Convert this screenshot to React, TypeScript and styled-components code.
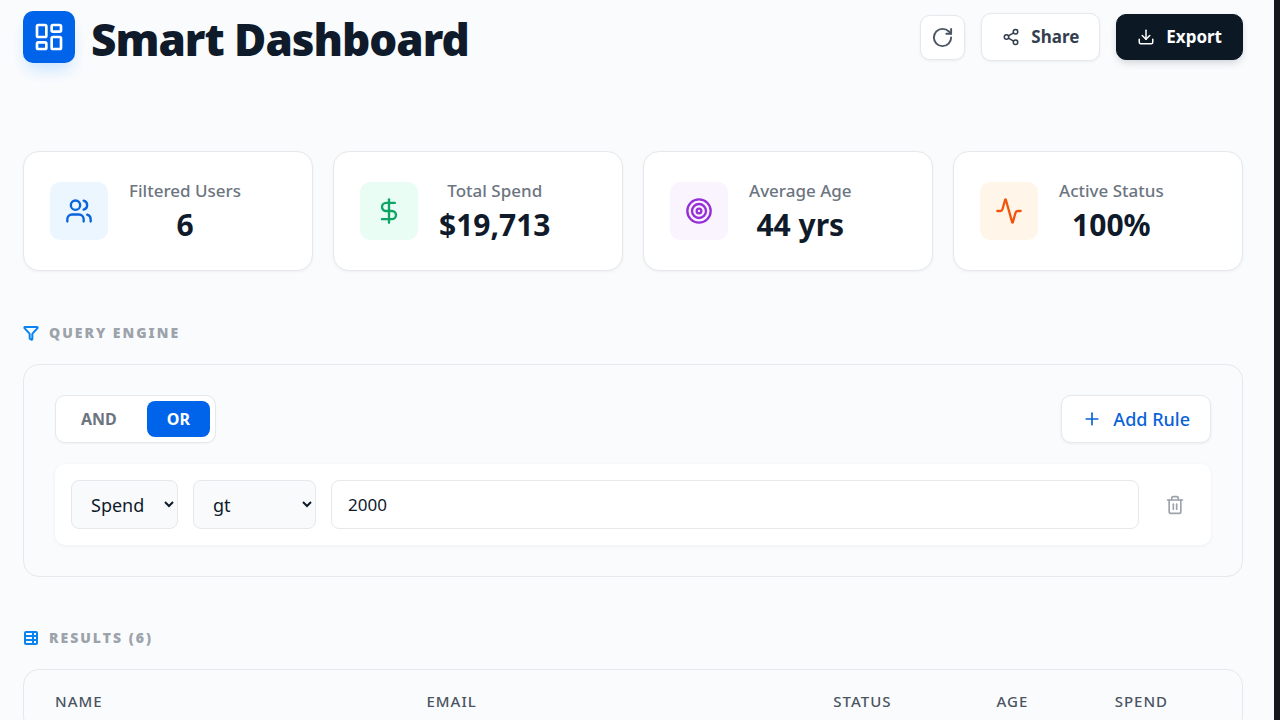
import React, { useState } from "react";
import styled, { createGlobalStyle } from "styled-components";
import {
  Activity,
  DollarSign,
  Download,
  Funnel,
  LayoutDashboard,
  Plus,
  RotateCw,
  Share2,
  Target,
  Trash2,
  Users,
} from "lucide-react";

const GlobalStyle = createGlobalStyle`
  *, *::before, *::after { box-sizing: border-box; }
  body {
    margin: 0;
    background: #15171c;
    color: #0f1a2a;
    font-family: "Noto Sans", "Open Sans", sans-serif;
    font-size: 17px;
    line-height: 24px;
  }
  button, input, select { font: inherit; color: inherit; margin: 0; }
`;

const Page = styled.main`
  height: 100vh;
  margin-right: 6px;
  padding: 11px 31px 0 23px;
  overflow: hidden;
  background: #fafbfd;
`;

const Header = styled.header`
  display: flex;
  align-items: flex-start;
  justify-content: space-between;
  margin-bottom: 84px;
`;

const Brand = styled.div`
  display: flex;
  align-items: flex-start;
  gap: 16px;
`;

const Logo = styled.div`
  display: grid;
  place-items: center;
  width: 52px;
  height: 52px;
  border-radius: 10px;
  background: #0064ea;
  color: #fff;
  box-shadow: 0 10px 16px -4px #c3e2ff;
`;

const Title = styled.h1`
  margin: 0;
  font-size: 44px;
  line-height: 56px;
  font-weight: 900;
  letter-spacing: -1px;
`;

const Actions = styled.div`
  display: flex;
  align-items: center;
  gap: 16px;
  padding-top: 2px;
`;

const Button = styled.button<{ $tone?: "dark" | "link" }>`
  display: flex;
  align-items: center;
  justify-content: center;
  gap: 11px;
  height: ${(p) => (p.$tone === "dark" ? 46 : 48)}px;
  padding: 0 20px;
  border: 1px solid ${(p) => (p.$tone === "dark" ? "#0d1825" : "#e6e8eb")};
  border-radius: 10px;
  background: ${(p) => (p.$tone === "dark" ? "#0d1825" : "#fff")};
  color: ${(p) => (p.$tone === "dark" ? "#fff" : p.$tone === "link" ? "#0a62d8" : "#333f4e")};
  font-size: ${(p) => (p.$tone === "link" ? 18 : 17)}px;
  font-weight: ${(p) => (p.$tone === "link" ? 500 : 700)};
  box-shadow: ${(p) =>
    p.$tone === "dark" ? "0 4px 8px -2px rgba(13, 24, 37, 0.2)" : "0 1px 3px rgba(13, 24, 37, 0.06)"};
  cursor: pointer;
`;

const IconButton = styled(Button)`
  width: 45px;
  height: 45px;
  padding: 0;
  color: #4a5462;
`;

const Stats = styled.section`
  display: grid;
  grid-template-columns: repeat(4, 1fr);
  gap: 20px;
  margin-bottom: 50px;
`;

const StatCard = styled.article`
  display: flex;
  align-items: center;
  gap: 21px;
  height: 120px;
  padding: 0 26px;
  border: 1px solid #e6e8eb;
  border-radius: 16px;
  background: #fff;
  box-shadow: 0 1px 3px rgba(13, 24, 37, 0.05);
`;

const StatIcon = styled.div<{ $bg: string; $color: string }>`
  display: grid;
  place-items: center;
  width: 58px;
  height: 58px;
  border-radius: 10px;
  background: ${(p) => p.$bg};
  color: ${(p) => p.$color};
`;

const StatText = styled.div`
  text-align: center;
`;

const StatLabel = styled.p`
  margin: 0;
  color: #6c757f;
  font-weight: 500;
`;

const StatValue = styled.p`
  margin: 0;
  padding-top: 3px;
  font-size: 30px;
  line-height: 38px;
  font-weight: 700;
`;

const SectionTitle = styled.h2`
  display: flex;
  align-items: center;
  gap: 10px;
  margin: 0 0 19px;
  color: #9ca3ab;
  font-size: 14px;
  line-height: 24px;
  font-weight: 900;
  letter-spacing: 2px;
  text-transform: uppercase;

  svg { color: #0a84f0; }
`;

const Panel = styled.section`
  margin-bottom: 49px;
  padding: 30px 31px 31px;
  border: 1px solid #e6e8eb;
  border-radius: 16px;
`;

const PanelBar = styled.div`
  display: flex;
  align-items: center;
  justify-content: space-between;
  margin-bottom: 21px;
`;

const Toggle = styled.div`
  display: flex;
  gap: 10px;
  padding: 5px;
  border: 1px solid #e6e8eb;
  border-radius: 10px;
  background: #fff;
  box-shadow: 0 1px 2px rgba(13, 24, 37, 0.04);
`;

const ToggleButton = styled.button<{ $active: boolean }>`
  height: 36px;
  padding: 0 20px;
  border: 0;
  border-radius: 8px;
  background: ${(p) => (p.$active ? "#0064ea" : "transparent")};
  color: ${(p) => (p.$active ? "#fff" : "#6c757f")};
  font-size: 16px;
  font-weight: 700;
  cursor: pointer;
`;

const Rule = styled.div`
  display: flex;
  align-items: center;
  gap: 15px;
  padding: 16px;
  border-radius: 10px;
  background: #fff;
  box-shadow: 0 1px 4px rgba(13, 24, 37, 0.05);
`;

const SelectBox = styled.select<{ $width: number }>`
  width: ${(p) => p.$width}px;
  height: 49px;
  padding: 0 3px 0 15px;
  border: 1px solid #e6e8eb;
  border-radius: 8px;
  background: #f9fafc;
  font-size: 18px;
`;

const ValueInput = styled.input`
  flex: 1;
  min-width: 0;
  height: 49px;
  padding: 0 16px;
  border: 1px solid #e6e8eb;
  border-radius: 8px;
  background: #fff;
`;

const DeleteButton = styled.button`
  display: grid;
  place-items: center;
  width: 41px;
  height: 40px;
  padding: 0;
  border: 0;
  background: none;
  color: #9ca3ab;
  cursor: pointer;
`;

const TablePanel = styled.div`
  border: 1px solid #e6e8eb;
  border-radius: 16px;
  overflow: hidden;
`;

const Table = styled.table`
  width: 100%;
  border-collapse: collapse;
  table-layout: fixed;
`;

const HeadCell = styled.th<{ $width: string }>`
  width: ${(p) => p.$width};
  height: 62px;
  padding: 0 0 0 31px;
  color: #4a5462;
  font-size: 15px;
  font-weight: 500;
  letter-spacing: 1px;
  text-align: left;
  text-transform: uppercase;
`;

const stats = [
  { label: "Filtered Users", value: "6", icon: Users, bg: "#ecf6ff", color: "#0a64dc" },
  { label: "Total Spend", value: "$19,713", icon: DollarSign, bg: "#eafdf4", color: "#0ca566" },
  { label: "Average Age", value: "44 yrs", icon: Target, bg: "#faf4ff", color: "#962fd8" },
  { label: "Active Status", value: "100%", icon: Activity, bg: "#fff6e9", color: "#f2540b" },
];

const columns = [
  { name: "Name", width: "30.5%" },
  { name: "Email", width: "33.4%" },
  { name: "Status", width: "13.4%" },
  { name: "Age", width: "9.7%" },
  { name: "Spend", width: "13%" },
];

const TableIcon = () => (
  <svg width="16" height="16" viewBox="0 0 16 16" fill="none" stroke="currentColor" strokeWidth="2" aria-hidden="true">
    <rect x="2" y="2" width="12" height="12" rx="1" />
    <path d="M2 6h12M2 10h12M10 2v12" />
  </svg>
);

export default function App() {
  const [mode, setMode] = useState("OR");
  const [value, setValue] = useState("2000");

  return (
    <>
      <GlobalStyle />
      <Page>
        <Header>
          <Brand>
            <Logo>
              <LayoutDashboard size={32} strokeWidth={2} />
            </Logo>
            <Title>Smart Dashboard</Title>
          </Brand>
          <Actions>
            <IconButton type="button" aria-label="Refresh">
              <RotateCw size={23} />
            </IconButton>
            <Button type="button">
              <Share2 size={18} />
              Share
            </Button>
            <Button type="button" $tone="dark">
              <Download size={18} />
              Export
            </Button>
          </Actions>
        </Header>

        <Stats>
          {stats.map(({ label, value: amount, icon: Icon, bg, color }) => (
            <StatCard key={label}>
              <StatIcon $bg={bg} $color={color}>
                <Icon size={28} />
              </StatIcon>
              <StatText>
                <StatLabel>{label}</StatLabel>
                <StatValue>{amount}</StatValue>
              </StatText>
            </StatCard>
          ))}
        </Stats>

        <SectionTitle>
          <Funnel size={16} strokeWidth={3} />
          Query Engine
        </SectionTitle>
        <Panel>
          <PanelBar>
            <Toggle>
              {["AND", "OR"].map((name) => (
                <ToggleButton
                  key={name}
                  type="button"
                  $active={mode === name}
                  aria-pressed={mode === name}
                  onClick={() => setMode(name)}
                >
                  {name}
                </ToggleButton>
              ))}
            </Toggle>
            <Button type="button" $tone="link">
              <Plus size={20} />
              Add Rule
            </Button>
          </PanelBar>
          <Rule>
            <SelectBox $width={107} aria-label="Field" defaultValue="Spend">
              <option>Spend</option>
              <option>Age</option>
            </SelectBox>
            <SelectBox $width={123} aria-label="Operator" defaultValue="gt">
              <option>gt</option>
              <option>lt</option>
            </SelectBox>
            <ValueInput aria-label="Value" value={value} onChange={(e) => setValue(e.target.value)} />
            <DeleteButton type="button" aria-label="Delete rule">
              <Trash2 size={20} />
            </DeleteButton>
          </Rule>
        </Panel>

        <SectionTitle>
          <TableIcon />
          Results (6)
        </SectionTitle>
        <TablePanel>
          <Table>
            <thead>
              <tr>
                {columns.map((column) => (
                  <HeadCell key={column.name} scope="col" $width={column.width}>
                    {column.name}
                  </HeadCell>
                ))}
              </tr>
            </thead>
          </Table>
        </TablePanel>
      </Page>
    </>
  );
}
